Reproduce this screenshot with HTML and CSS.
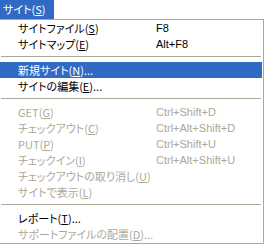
FILE: index.html
```html
<!DOCTYPE html>
<html>
<head>
  <title>サイト</title>
  <link rel="stylesheet" href="styles.css">
</head>
<body>

  <div class="menubar">
    <span class="menu-title">サイト(<u>S</u>)</span>
  </div>

  <div class="menu">
    <div class="item"><span>サイトファイル(<u>S</u>)</span><span class="key">F8</span></div>
    <div class="item"><span>サイトマップ(<u>E</u>)</span><span class="key">Alt+F8</span></div>
    <div class="sep"></div>
    <div class="item active"><span>新規サイト(<u>N</u>)...</span><span class="key"></span></div>
    <div class="item"><span>サイトの編集(<u>E</u>)...</span><span class="key"></span></div>
    <div class="sep"></div>
    <div class="item off"><span>GET(<u>G</u>)</span><span class="key">Ctrl+Shift+D</span></div>
    <div class="item off"><span>チェックアウト(<u>C</u>)</span><span class="key">Ctrl+Alt+Shift+D</span></div>
    <div class="item off"><span>PUT(<u>P</u>)</span><span class="key">Ctrl+Shift+U</span></div>
    <div class="item off"><span>チェックイン(<u>I</u>)</span><span class="key">Ctrl+Alt+Shift+U</span></div>
    <div class="item off"><span>チェックアウトの取り消し(<u>U</u>)</span><span class="key"></span></div>
    <div class="item off"><span>サイトで表示(<u>L</u>)</span><span class="key"></span></div>
    <div class="sep"></div>
    <div class="item"><span>レポート(<u>T</u>)...</span><span class="key"></span></div>
    <div class="item off"><span>サポートファイルの配置(<u>D</u>)...</span><span class="key"></span></div>
  </div>

</body>
</html>
```

FILE: styles.css
```css
body { margin: 0; background: #fff; font-family: "Noto Sans CJK JP", sans-serif; font-size: 11px; font-feature-settings: "palt" 1; color: #000; }
u { text-decoration: underline; text-underline-offset: 1px; }
.menubar { height: 19px; }
.menu-title { display: inline-block; width: 51px; height: 19px; line-height: 19px; padding-left: 3px; background: #316ac5; color: #fff; }
.menu { width: 262px; margin-left: -1px; padding: 0 1px 1px 0; border: 1px solid #aca899; background: #fff; box-shadow: 2px 2px 2px rgba(0, 0, 0, 0.45); }
.item { display: grid; grid-template-columns: 138px 1fr; height: 16px; line-height: 16px; padding-left: 18px; white-space: nowrap; }
.key { font-family: "Liberation Sans", sans-serif; font-size: 11px; }
.active { background: #316ac5; color: #fff; }
.off { color: #aca899; }
.sep { height: 1px; background: #aca899; margin: 4px 1px 5px 1px; }
```
